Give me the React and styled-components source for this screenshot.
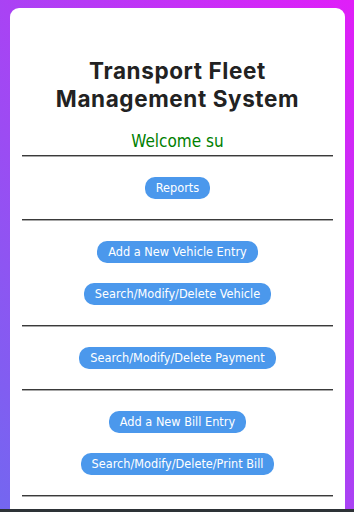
import React from 'react';
import styled, { createGlobalStyle } from 'styled-components';

const GlobalStyle = createGlobalStyle`
    html, body {
        margin: 0;
        padding: 0;
        height: 100%;
        overflow: hidden;
    }
    body {
        background: linear-gradient(to right top, #7367f0, #e01ef8);
        font-family: 'DejaVu Sans', Tahoma, sans-serif;
    }
`;

const Page = styled.div`
    padding: 8px 9px 0 10px;
    height: 512px;
    box-sizing: border-box;
`;

const Card = styled.div`
    background: #fff;
    border-radius: 9px 9px 0 0;
    padding: 49px 12px 20px;
    min-height: 520px;
    box-sizing: border-box;
`;

const Title = styled.h1`
    margin: 0;
    font-family: Inter, 'Noto Sans', sans-serif;
    font-weight: 700;
    font-size: 22.5px;
    letter-spacing: 0.6px;
    line-height: 28px;
    color: #222;
    text-align: center;
`;

const Welcome = styled.h2`
    margin: 18px 0 4px;
    font-family: 'DejaVu Sans Condensed', 'DejaVu Sans', sans-serif;
    font-weight: 400;
    font-size: 17px;
    line-height: 20px;
    color: #008000;
    text-align: center;
`;

const Divider = styled.hr`
    margin: 0;
    height: 0;
    border: none;
    border-top: 1px solid #3a3a3a;
    border-bottom: 1px solid #a8a8a8;
`;

const Section = styled.div`
    display: flex;
    flex-direction: column;
    align-items: center;
    gap: 20px;
    padding: 20px 0;
`;

const Button = styled.button`
    height: 22px;
    padding: 0 11px;
    border: none;
    border-radius: 10px;
    background: #4b98ec;
    color: #fff;
    font-family: 'DejaVu Sans Condensed', 'DejaVu Sans', sans-serif;
    font-size: 12.6px;
    line-height: 22px;
    cursor: pointer;
`;

const BottomBar = styled.div`
    position: fixed;
    left: 0;
    right: 0;
    bottom: 0;
    height: 3px;
    background: #2d3236;
`;

const sections = [
    ['Reports'],
    ['Add a New Vehicle Entry', 'Search/Modify/Delete Vehicle'],
    ['Search/Modify/Delete Payment'],
    ['Add a New Bill Entry', 'Search/Modify/Delete/Print Bill'],
];

export default function App() {
    return (
        <Page>
            <GlobalStyle />
            <Card>
                <Title>Transport Fleet<br />Management System</Title>
                <Welcome>Welcome su</Welcome>
                <Divider />
                {sections.map((items, i) => (
                    <React.Fragment key={i}>
                        <Section>
                            {items.map(label => (
                                <Button key={label}>{label}</Button>
                            ))}
                        </Section>
                        <Divider />
                    </React.Fragment>
                ))}
            </Card>
            <BottomBar />
        </Page>
    );
}
